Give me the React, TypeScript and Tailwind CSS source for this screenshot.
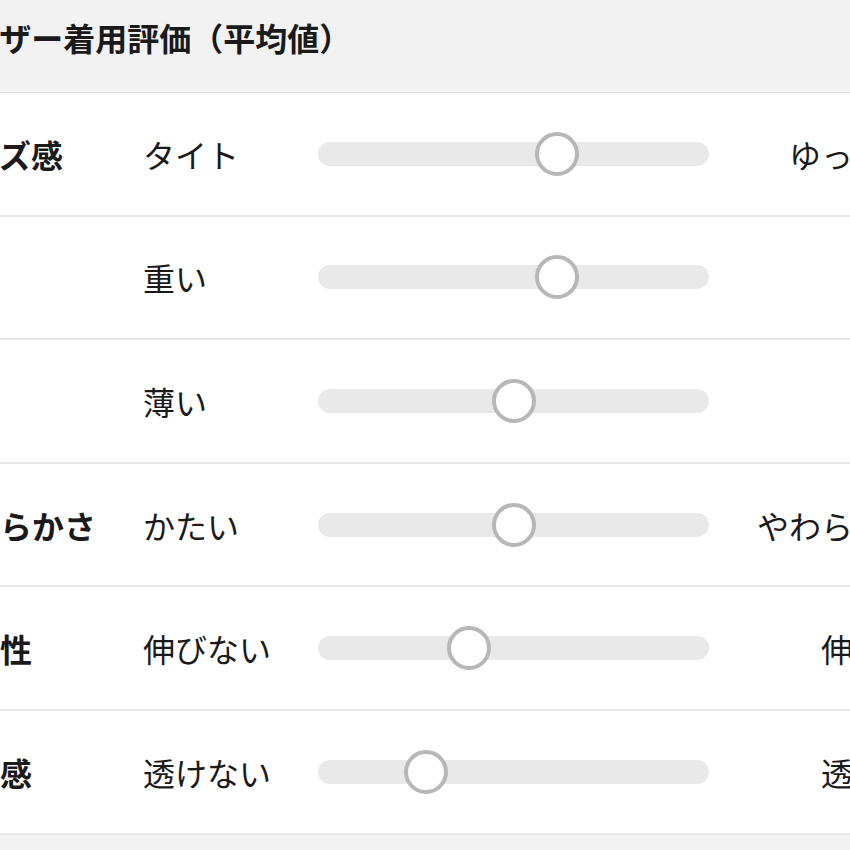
const rows = [
  { label: 'サイズ感', left: 'タイト', right: 'ゆったり', pos: 239 },
  { label: '重さ', left: '重い', right: '軽い', pos: 239 },
  { label: '厚さ', left: '薄い', right: '厚い', pos: 196 },
  { label: 'やわらかさ', left: 'かたい', right: 'やわらかい', pos: 196 },
  { label: '伸縮性', left: '伸びない', right: '伸びる', pos: 151 },
  { label: '透け感', left: '透けない', right: '透ける', pos: 108 },
];

function Slider({ pos }: { pos: number }) {
  return (
    <div className="relative w-[391px] h-[24px] rounded-full bg-[#e9e9e9] shrink-0">
      <div
        className="absolute top-1/2 w-[44px] h-[44px] -translate-x-1/2 -translate-y-1/2 rounded-full bg-white border-4 border-[#b7b7b7]"
        style={{ left: pos }}
      />
    </div>
  );
}

export default function App() {
  return (
    <div
      className="w-[850px] h-[850px] overflow-hidden bg-[#f2f2f2] text-[#1a1a1a]"
      style={{ fontFamily: '"Noto Sans CJK JP", "Noto Sans", sans-serif' }}
    >
      <div className="-ml-[64px] w-[1000px]">
        {/* Header */}
        <div className="h-[93px] pt-[13px] border-b border-[#e2e2e2]">
          <h2 className="text-[32px] leading-[48px] font-bold">ユーザー着用評価（平均値）</h2>
        </div>

        {/* Rating rows */}
        <div className="bg-white">
          {rows.map((r) => (
            <div key={r.label} className="flex items-center h-[123.6px] border-b-2 border-[#e8e8e8]">
              <div className="w-[207px] shrink-0 text-[32px] leading-[48px] font-bold">{r.label}</div>
              <div className="w-[175px] shrink-0 text-[32px] leading-[48px]">{r.left}</div>
              <Slider pos={r.pos} />
              <div className="w-[208px] shrink-0 text-right text-[32px] leading-[48px]">{r.right}</div>
            </div>
          ))}
        </div>
      </div>
    </div>
  );
}
